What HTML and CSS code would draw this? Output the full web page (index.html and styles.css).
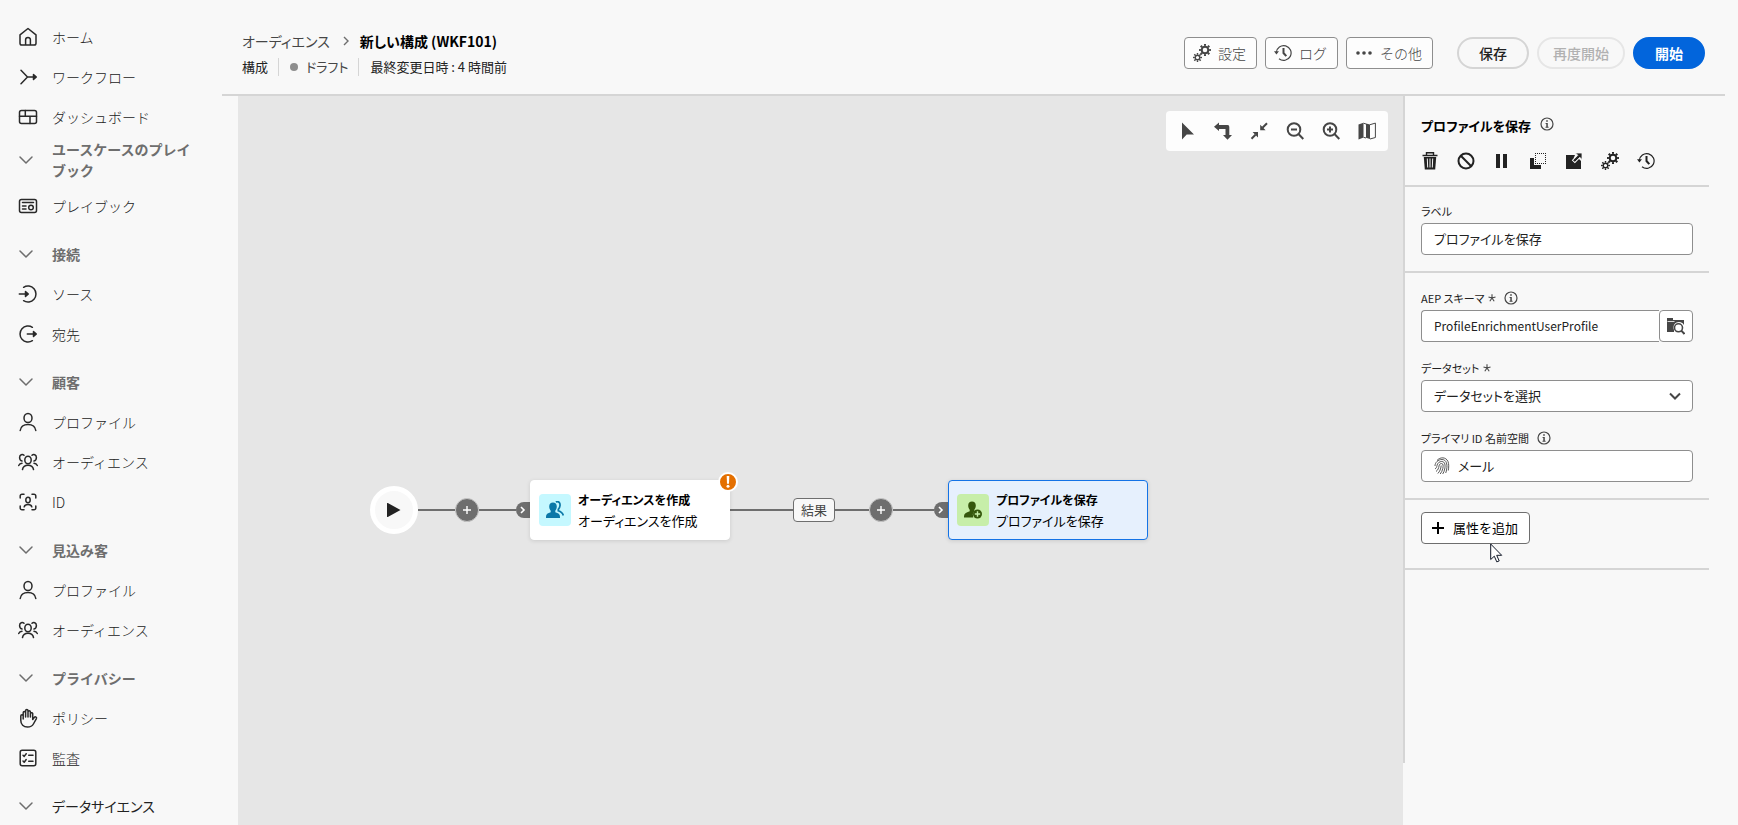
FILE: index.html
```html
<!DOCTYPE html>
<html lang="ja">
<head>
<meta charset="utf-8">
<meta name="viewport" content="width=device-width, initial-scale=1">
<title>新しい構成 (WKF101)</title>
<link rel="stylesheet" href="styles.css">
</head>
<body>
<svg class="sprite" aria-hidden="true">
  <symbol id="chev" viewBox="0 0 20 20"><path d="M4 7l6 6 6-6"/></symbol>
  <symbol id="star" viewBox="0 0 8 8"><path d="M4 .3V4M4 4 .5 2.900M4 4l3.500-1.100M4 4 1.800 7.200M4 4l2.200 3.200" fill="none" stroke="currentColor" stroke-width="1.100"/></symbol>
  <symbol id="user" viewBox="0 0 20 20"><ellipse cx="10" cy="6" rx="4" ry="4.600"/><path d="M2.200 18.500c.6-4.200 3.600-6 7.800-6s7.200 1.800 7.800 6"/></symbol>
  <symbol id="users" viewBox="0 0 20 20"><ellipse cx="10" cy="8" rx="3.200" ry="3.800"/><path d="M4.500 17.500c.5-2.800 2.500-4.200 5.500-4.200s5 1.400 5.500 4.200M6 3.200C4.500 1.800 1.600 2.600 1.600 5.500c0 1.800 1 3.200 2.400 3.500M14 3.200c1.500-1.400 4.400-.6 4.400 2.300 0 1.800-1 3.200-2.400 3.500M.7 13.500c.6-1.200 1.700-2 3.300-2.200M19.300 13.500c-.6-1.200-1.700-2-3.300-2.200"/></symbol>
  <symbol id="gears" viewBox="0 0 18 18"><g fill="none" stroke="currentColor"><circle cx="12" cy="6" r="3.300" stroke-width="2"/><circle cx="12" cy="6" r="4.900" stroke-width="2.200" pathLength="80" stroke-dasharray="5 5" stroke-dashoffset="2.500"/><circle cx="4.500" cy="13.500" r="2.300" stroke-width="1.400"/><circle cx="4.500" cy="13.500" r="3.600" stroke-width="1.800" pathLength="80" stroke-dasharray="5 5" stroke-dashoffset="2.500"/></g></symbol>
  <symbol id="history" viewBox="0 0 18 18"><g fill="none" stroke="currentColor"><path d="M2.300 8.500a7.400 7.400 0 1 1 2.700 6.200" stroke-width="1.200"/><path d="M9.500 4v5l2.800 3.200" stroke-width="2"/></g><path d="M0 7.300h5L2.400 10.500z" fill="currentColor"/></symbol>
  <symbol id="info" viewBox="0 0 14 14"><circle cx="7" cy="7" r="6" fill="none" stroke="currentColor" stroke-width="1.200"/><path d="M6.200 3.300h1.600v1.500H6.200zM5.600 6h2.200v3.700h.8v1H5.500v-1h.8V7h-.7z" fill="currentColor"/></symbol>
</svg>

<div class="app">
  <nav class="side" aria-label="メイン">
    <a class="item" href="#"><svg class="ico" viewBox="0 0 20 20"><path d="M2 7.800 10 1.500l8 6.300v8.400a1.800 1.800 0 0 1-1.800 1.800H3.800A1.800 1.800 0 0 1 2 16.200zM7.600 18v-5.200a2.400 2.400 0 0 1 4.800 0V18"/></svg>ホーム</a>
    <a class="item" href="#"><svg class="ico" viewBox="0 0 20 20"><path d="M3 3.300 9.500 10 3 16.700M9.500 10H18M15.500 7.500 18.300 10l-2.800 2.500z"/></svg>ワークフロー</a>
    <a class="item" href="#"><svg class="ico" viewBox="0 0 20 20"><rect x="1.500" y="3.500" width="17" height="13" rx="2"/><path d="M1.500 9.300h17M7.300 3.500v5.800M12 9.300v7.200"/></svg>ダッシュボード</a>
    <button class="item head tall"><svg class="ico" viewBox="0 0 20 20"><use href="#chev"/></svg><span>ユースケースのプレイ<br>ブック</span></button>
    <a class="item" href="#"><svg class="ico" viewBox="0 0 20 20"><rect x="1.500" y="3.500" width="17" height="13" rx="2"/><path d="M4.500 6.500h11M4.500 10h3.500M4.500 13h3.500"/><circle cx="13" cy="11.500" r="2.300"/></svg>プレイブック</a>
    <button class="item head"><svg class="ico" viewBox="0 0 20 20"><use href="#chev"/></svg>接続</button>
    <a class="item" href="#"><svg class="ico" viewBox="0 0 20 20"><path d="M5.600 3.300a8 8 0 1 1 0 13.400M1.300 10H10M7.500 7.500 10.300 10l-2.800 2.500z"/></svg>ソース</a>
    <a class="item" href="#"><svg class="ico" viewBox="0 0 20 20"><path d="M14.400 3.300a8 8 0 1 0 0 13.400M9.300 10H18M15.500 7.500 18.300 10l-2.800 2.500z"/></svg>宛先</a>
    <button class="item head"><svg class="ico" viewBox="0 0 20 20"><use href="#chev"/></svg>顧客</button>
    <a class="item" href="#"><svg class="ico" viewBox="0 0 20 20"><use href="#user"/></svg>プロファイル</a>
    <a class="item" href="#"><svg class="ico" viewBox="0 0 20 20"><use href="#users"/></svg>オーディエンス</a>
    <a class="item" href="#"><svg class="ico" viewBox="0 0 20 20"><path d="M2.200 6V4A1.800 1.800 0 0 1 4 2.200h2M14 2.200h2A1.800 1.800 0 0 1 17.800 4v2M17.800 14v2a1.800 1.800 0 0 1-1.800 1.800h-2M6 17.800H4A1.800 1.800 0 0 1 2.200 16v-2M6.200 14.800c.4-1.700 1.900-2.300 3.800-2.300s3.400.6 3.800 2.300"/><ellipse cx="10" cy="8" rx="2.200" ry="2.700"/></svg>ID</a>
    <button class="item head"><svg class="ico" viewBox="0 0 20 20"><use href="#chev"/></svg>見込み客</button>
    <a class="item" href="#"><svg class="ico" viewBox="0 0 20 20"><use href="#user"/></svg>プロファイル</a>
    <a class="item" href="#"><svg class="ico" viewBox="0 0 20 20"><use href="#users"/></svg>オーディエンス</a>
    <button class="item head"><svg class="ico" viewBox="0 0 20 20"><use href="#chev"/></svg>プライバシー</button>
    <a class="item" href="#"><svg class="ico" viewBox="0 0 20 20"><path d="M5.200 11V4.800a1.200 1.200 0 0 1 2.400 0V9M7.600 5V2.800a1.200 1.200 0 0 1 2.400 0V9M10 4a1.200 1.200 0 0 1 2.400 0v5M12.400 5.500a1.200 1.200 0 0 1 2.300 0V11.500l1.700-2.200a1.200 1.200 0 0 1 2 1.300l-3 5.400C14.300 18 12.500 19 9.500 19 5.500 19 2.800 16.500 2.800 12.500V8a1.200 1.200 0 0 1 2.400 0"/></svg>ポリシー</a>
    <a class="item" href="#"><svg class="ico" viewBox="0 0 20 20"><rect x="2.200" y="2.200" width="15.600" height="15.600" rx="2"/><path d="M5 7.200l1.200 1.200 2-2.700M5 13l1.200 1.200 2-2.700M10.700 7.300H15M10.700 13.200H15"/></svg>監査</a>
    <button class="item head plain"><svg class="ico" viewBox="0 0 20 20"><use href="#chev"/></svg>データサイエンス</button>
  </nav>

  <div class="main">
    <header class="top">
      <div class="titles">
        <div class="crumbs"><a href="#">オーディエンス</a><svg class="sep" viewBox="0 0 8 10"><path d="M2 1l4 4-4 4"/></svg><h1>新しい構成 (WKF101)</h1></div>
        <div class="meta"><span>構成</span><span class="status">ドラフト</span><span>最終変更日時 : 4 時間前</span></div>
      </div>
      <div class="actions">
        <button class="btn"><svg viewBox="0 0 18 18"><use href="#gears"/></svg>設定</button>
        <button class="btn"><svg viewBox="0 0 18 18"><use href="#history"/></svg>ログ</button>
        <button class="btn"><svg viewBox="0 0 18 18"><g fill="currentColor"><circle cx="3" cy="9" r="1.800"/><circle cx="9" cy="9" r="1.800"/><circle cx="15" cy="9" r="1.800"/></g></svg>その他</button>
        <button class="pill first">保存</button>
        <button class="pill wide" disabled>再度開始</button>
        <button class="pill cta">開始</button>
      </div>
    </header>

    <div class="work">
      <section class="canvas" aria-label="ワークフロー">
        <div class="tools">
          <button aria-label="選択"><svg viewBox="0 0 18 18"><path d="M4 .5v17l4.700-5H16z" fill="currentColor"/></svg></button>
          <button aria-label="方向"><svg viewBox="0 0 18 18"><path d="M5 .5V3h8.500A1.800 1.800 0 0 1 15.300 5v8H18l-4.500 4.800L9 13h2.500V7H5v2L0 4.700z" fill="currentColor"/></svg></button>
          <button aria-label="全体表示"><svg viewBox="0 0 18 18"><path d="M17 1.200 12.500 5.700M1.500 16.800 5.500 12.800" fill="none" stroke="currentColor" stroke-width="2"/><path d="M10.200 2.800v5.400h5.400zM8 15.400V10H2.600z" fill="currentColor"/></svg></button>
          <button aria-label="縮小"><svg viewBox="0 0 18 18"><g fill="none" stroke="currentColor" stroke-width="2"><circle cx="8" cy="7.500" r="6.300"/><path d="M12.500 12l4.800 5M5 7.500h6"/></g></svg></button>
          <button aria-label="拡大"><svg viewBox="0 0 18 18"><g fill="none" stroke="currentColor" stroke-width="2"><circle cx="8" cy="7.500" r="6.300"/><path d="M12.500 12l4.800 5M5 7.500h6M8 4.500v6"/></g></svg></button>
          <button aria-label="マップ"><svg viewBox="0 0 18 18"><path d="M.5 2.500 5.500.8v14.700L.5 17.500zM8 1.500l4 1v14.500l-4-1.200z" fill="currentColor"/><path d="M5.500 1.200 8 2M5.500 15.300 8 16M12 2.700l5.400-1.600v14.400L12 17" fill="none" stroke="currentColor"/></svg></button>
        </div>

        <div class="flow">
          <div class="start"><svg viewBox="0 0 14 14"><path d="M0 .5a.5.5 0 0 1 .8-.4L13.500 7 .8 13.900a.5.5 0 0 1-.8-.4z" fill="#222"/></svg></div>
          <i class="wire w37"></i>
          <button class="plus" aria-label="追加"><svg viewBox="0 0 8 8"><path d="M4 0v8M0 4h8"/></svg></button>
          <i class="wire w37"></i>
          <span class="port"><svg viewBox="0 0 6 8"><path d="M1 1l3 3-3 3"/></svg></span>
          <article class="node">
            <span class="tile cyan"><svg viewBox="0 0 18 18" fill="#0b78a8"><path d="M7 1.500c2.300 0 3.800 1.600 3.800 4 0 2.100-.8 3.300-1.500 4.200v1.500c3 .8 4.700 1.800 4.700 4.600V17H0v-1.200c0-2.800 1.700-3.800 4.700-4.600V9.700C4 8.800 3.200 7.600 3.200 5.500c0-2.400 1.500-4 3.800-4z"/><path d="M9.800 1c3-1.200 4.500.9 4.200 3.600-.2 2-.9 3-1.700 3.800v1.400c2.600.9 4.400 2.200 5 4.700" fill="none" stroke="#0b78a8" stroke-width="1.700"/></svg></span>
            <span class="txt"><b>オーディエンスを作成</b><span>オーディエンスを作成</span></span>
            <span class="warn" role="img" aria-label="警告"><svg viewBox="0 0 4 12"><path d="M.7 0h2.600L3 7.700H1z" fill="#fff"/><circle cx="2" cy="10.300" r="1.500" fill="#fff"/></svg></span>
          </article>
          <i class="wire w63"></i>
          <span class="result">結果</span>
          <i class="wire w34"></i>
          <button class="plus" aria-label="追加"><svg viewBox="0 0 8 8"><path d="M4 0v8M0 4h8"/></svg></button>
          <i class="wire w41"></i>
          <span class="port"><svg viewBox="0 0 6 8"><path d="M1 1l3 3-3 3"/></svg></span>
          <article class="node on">
            <span class="tile green"><svg viewBox="0 0 18 18" fill="#35560c"><path d="M8 .5c2.300 0 3.800 1.600 3.800 4 0 2.100-.8 3.300-1.500 4.200v1.200L8.800 13l.5 3.500H0v-1.200c0-2.800 2-3.800 5.700-5V8.700C5 7.800 4.200 6.600 4.200 4.500c0-2.400 1.500-4 3.800-4z"/><circle cx="13.500" cy="13" r="4.500"/><path d="M13.500 10.300v5.400M10.800 13h5.400" stroke="#c7eea9" stroke-width="1.400"/></svg></span>
            <span class="txt"><b>プロファイルを保存</b><span>プロファイルを保存</span></span>
          </article>
        </div>
      </section>

      <aside class="panel">
        <section class="sec intro">
          <h2>プロファイルを保存 <svg class="info" viewBox="0 0 14 14"><use href="#info"/></svg></h2>
          <div class="cmds">
            <button aria-label="削除"><svg viewBox="0 0 18 18"><path d="M5.500 3V.8h7V3M1.500 3.500h15" fill="none" stroke="currentColor" stroke-width="1.400"/><path d="M2.800 5h12.400l-1 12.500H3.800z" fill="currentColor"/><path d="M6.300 6.500l.4 9M9 6.500v9M11.700 6.500l-.4 9" stroke="#f8f8f8"/></svg></button>
            <button aria-label="無効"><svg viewBox="0 0 18 18"><g fill="none" stroke="currentColor" stroke-width="2"><circle cx="9" cy="9" r="7.500"/><path d="M3.800 3.800l10.400 10.400"/></g></svg></button>
            <button aria-label="一時停止"><svg viewBox="0 0 18 18"><path d="M3 2h4v14H3zM10 2h4v14h-4z" fill="currentColor"/></svg></button>
            <button aria-label="コピー"><svg viewBox="0 0 18 18"><path d="M1 6h4v7h7v4H1z" fill="currentColor"/><path d="M6 1.500h11M6 11.500h11M6.500 3v9M16.500 3v9" fill="none" stroke="currentColor" stroke-dasharray="1 1"/></svg></button>
            <button aria-label="開く"><svg viewBox="0 0 18 18"><path d="M1 3h9L8.500 6.500 6.800 8.200l3 3L14 7l2 2v8H1z" fill="currentColor"/><path d="M10.500 1H17v6.500l-2.200-2.200-5 5-2-2 5-5z" fill="currentColor" stroke="#f8f8f8" stroke-width=".8"/></svg></button>
            <button aria-label="設定"><svg viewBox="0 0 18 18"><use href="#gears"/></svg></button>
            <button aria-label="ログ"><svg viewBox="0 0 18 18"><use href="#history"/></svg></button>
          </div>
        </section>
        <section class="sec">
          <div class="field"><label for="lb">ラベル</label><input id="lb" class="box" value="プロファイルを保存"></div>
        </section>
        <section class="sec fields">
          <div class="field"><label for="sc">AEP スキーマ <svg class="req" viewBox="0 0 8 8"><use href="#star"/></svg> <svg class="info" viewBox="0 0 14 14"><use href="#info"/></svg></label>
            <div class="group"><input id="sc" class="box" value="ProfileEnrichmentUserProfile"><button class="browse" aria-label="参照"><svg viewBox="0 0 18 18"><path d="M0 1h6v2h11v5a5.500 5.500 0 0 0-10 5v2H0z" fill="currentColor"/><path d="M.5 4.500h7" stroke="#fff" stroke-width=".8"/><circle cx="11.500" cy="10.800" r="4" fill="#fff" stroke="currentColor" stroke-width="1.600"/><path d="M14.300 13.600l3.200 3.400" stroke="currentColor" stroke-width="2"/></svg></button></div></div>
          <div class="field"><label for="ds">データセット <svg class="req" viewBox="0 0 8 8"><use href="#star"/></svg></label>
            <div class="pick"><select id="ds" class="box"><option>データセットを選択</option></select><svg viewBox="0 0 12 8"><path d="M1 1.500l5 5 5-5"/></svg></div></div>
          <div class="field"><label for="ns">プライマリ ID 名前空間 <svg class="info" viewBox="0 0 14 14"><use href="#info"/></svg></label>
            <div class="box lead"><svg viewBox="0 0 16 18"><path d="M3 3.500C6-.2 12-.2 14 4.500c1 2.500.8 6 .3 9M1 9c0-3.500 3-6.500 7-6.500 4.500 0 5.500 5 4.700 9.500-.2 1.500-.5 2.700-1 4M1 12c1.500-1 1.700-2 2-3.500.5-2.500 2.500-4 4.700-4 3.500 0 3.800 4 3 7.500-.4 2-1 3.500-2 5M2 14.500c2-1.500 2.700-3.300 3-5.500.3-1.700 1.300-2.500 2.500-2.500 2 0 1.800 2.500 1.300 5-.4 2-1.300 3.800-2.600 5.500M3.800 16.500c2-2 3-4.500 3.400-8"/></svg><input id="ns" value="メール"></div></div>
        </section>
        <section class="sec add">
          <button class="addbtn"><svg viewBox="0 0 12 12"><path d="M6 0v12M0 6h12"/></svg>属性を追加</button>
          <svg class="cursor" viewBox="0 0 13 20"><path d="M.7 1v15.500l3.600-3.300 2.500 5.700 2.400-1-2.500-5.600h5z" fill="#fff" stroke="#111827"/></svg>
        </section>
      </aside>
    </div>
  </div>
</div>
</body>
</html>
```

FILE: styles.css
```css
* { box-sizing: border-box; }
body {
  margin: 0;
  background: #f8f8f8;
  color: #222;
  font: 14px/20px "Noto Sans CJK JP", sans-serif;
  overflow: hidden;
}
button, input, select { font: inherit; color: inherit; }
button { padding: 0; border: 0; background: none; cursor: pointer; }
a { color: inherit; text-decoration: none; }
h1, h2 { margin: 0; font-size: 13px; }
.sprite { position: absolute; width: 0; height: 0; }

.app { display: flex; height: 100vh; }

/* navigation */
.side { flex: 0 0 222px; padding-top: 17px; overflow: hidden; }
.item {
  display: flex;
  align-items: center;
  gap: 14px;
  width: 100%;
  height: 40px;
  padding-left: 18px;
  font-weight: 300;
  line-height: 21px;
  text-align: left;
}
.ico { flex: none; width: 20px; height: 20px; fill: none; stroke: #292929; stroke-width: 1.5; stroke-linecap: round; stroke-linejoin: round; }
.head { gap: 16px; margin-top: 8px; padding-left: 16px; color: #6e6e6e; font-weight: 700; }
.head .ico { stroke: #6e6e6e; }
.tall { height: 49px; margin-top: 0; padding-bottom: 3px; }
.plain { color: #222; font-weight: 400; font-feature-settings: "palt"; }

.main { flex: 1; display: flex; flex-direction: column; min-width: 0; }

/* header */
.top {
  display: flex;
  justify-content: space-between;
  align-items: flex-start;
  height: 96px;
  margin-right: 13px;
  padding: 29px 20px 0;
  border-bottom: 2px solid #d5d5d5;
}
.crumbs { display: flex; align-items: center; height: 24px; font-feature-settings: "palt"; color: #464646; }
.crumbs h1 { color: #000; font-size: 14px; }
.sep { width: 8px; height: 10px; margin: 0 10px 0 12px; fill: none; stroke: #6e6e6e; stroke-width: 1.4; }
.meta { display: flex; align-items: center; height: 28px; font-size: 13px; font-feature-settings: "palt"; }
.meta span + span { margin-left: 10px; padding-left: 11px; border-left: 1px solid #d5d5d5; line-height: 18px; }
.meta .status { display: flex; align-items: center; gap: 8px; color: #464646; }
.status::before { content: ""; width: 8px; height: 8px; border-radius: 50%; background: #8e8e8e; }

.actions { display: flex; gap: 8px; padding-top: 8px; }
.btn {
  display: flex;
  align-items: center;
  gap: 7px;
  height: 32px;
  padding: 0 10px 0 8px;
  border: 1px solid #8e8e8e;
  border-radius: 4px;
  background: #fdfdfd;
  color: #464646;
  font-weight: 300;
}
.btn svg { width: 18px; height: 18px; }
.pill { width: 72px; height: 32px; border: 2px solid #d5d5d5; border-radius: 16px; color: #222; font-weight: 500; }
.first { margin-left: 16px; }
.wide { width: 88px; }
.pill:disabled { border-color: #e6e6e6; color: #b1b1b1; }
.cta { border-color: #0265dc; background: #0265dc; color: #fff; font-weight: 700; }

/* canvas */
.work { flex: 1; display: flex; min-height: 0; padding-left: 16px; }
.canvas { position: relative; flex: 1; background: #e6e6e6; overflow: hidden; }
.tools {
  position: absolute;
  top: 15px;
  right: 15px;
  display: flex;
  padding: 2px 3px;
  border-radius: 4px;
  background: #fdfdfd;
  color: #464646;
}
.tools button { display: grid; place-items: center; width: 36px; height: 36px; }
.tools svg { width: 18px; height: 18px; }

.flow { position: absolute; top: 384px; left: 132px; display: flex; align-items: center; }
.start { display: grid; place-items: center; width: 48px; height: 48px; border: 5px solid #fff; border-radius: 50%; background: #f8f8f8; }
.start svg { width: 14px; height: 14px; }
.wire { height: 2px; background: #6e6e6e; }
.w34 { width: 34px; }
.w37 { width: 37px; }
.w41 { width: 41px; }
.w63 { width: 63px; }
.plus { display: grid; place-items: center; width: 24px; height: 24px; border: 1px solid #c4c4c4; border-radius: 50%; background: #6e6e6e; }
.plus svg { width: 8px; height: 8px; stroke: #fff; stroke-width: 1.4; }
.port { display: grid; place-items: center; width: 14px; height: 16px; border-radius: 8px 0 0 8px; background: #6e6e6e; }
.port svg { width: 6px; height: 8px; fill: none; stroke: #fff; stroke-width: 1.6; }
.node {
  position: relative;
  display: flex;
  align-items: center;
  gap: 7px;
  width: 200px;
  height: 60px;
  padding: 0 8px;
  border: 1px solid #fff;
  border-radius: 4px;
  background: #fff;
  box-shadow: 0 1px 4px rgba(0, 0, 0, .12);
  color: #000;
}
.on { border-color: #1473e6; background: #e6f0fd; }
.tile { display: grid; place-items: center; width: 32px; height: 32px; border-radius: 4px; }
.tile svg { width: 18px; height: 18px; }
.cyan { background: #c5f8ff; }
.green { background: #c7eea9; }
.txt { display: grid; font-size: 13px; line-height: 21px; font-feature-settings: "palt"; }
.txt b { font-size: 12px; }
.warn { position: absolute; top: -9px; right: -9px; display: grid; place-items: center; width: 20px; height: 20px; border: 2px solid #fff; border-radius: 50%; background: #e46f00; }
.warn svg { width: 4px; height: 12px; }
.result { padding: 0 7px; border: 1px solid #6e6e6e; border-radius: 4px; background: #f8f8f8; color: #464646; font-size: 13px; line-height: 22px; }

/* properties panel */
.panel { flex: 0 0 335px; align-self: flex-start; height: calc(100% - 62px); padding-right: 29px; border-left: 2px solid #d5d5d5; }
.sec { position: relative; padding: 14px 16px 16px; border-bottom: 2px solid #d5d5d5; }
.intro { padding: 18px 7px 6px; }
h2 { display: flex; gap: 9px; padding-left: 9px; line-height: 24px; color: #000; font-feature-settings: "palt"; }
.info { width: 14px; height: 14px; color: #464646; }
h2 .info { margin-top: 3px; }
.cmds { display: flex; margin-top: 5px; }
.cmds button { display: grid; place-items: center; width: 36px; height: 36px; }
.cmds svg { width: 18px; height: 18px; }
.fields { padding-top: 15px; }
.field label { display: flex; align-items: center; gap: 4px; height: 22px; padding-bottom: 2px; font-size: 11px; font-feature-settings: "palt"; }
.field label .info { margin-left: 4px; }
.req { width: 8px; height: 8px; color: #464646; }
.field + .field { margin-top: 16px; }
.box {
  display: block;
  width: 100%;
  height: 32px;
  padding: 0 12px;
  border: 1px solid #8e8e8e;
  border-radius: 4px;
  background: #fff;
  font-size: 13px;
  font-feature-settings: "palt";
}
input.box { padding-bottom: 2px; }
.group { display: flex; }
.group .box { border-right: 0; border-radius: 4px 0 0 4px; font-size: 12px; }
.browse { flex: 0 0 34px; display: grid; place-items: center; height: 32px; border: 1px solid #8e8e8e; border-radius: 4px; background: #fff; color: #464646; }
.browse svg { width: 18px; height: 18px; }
.pick { position: relative; }
.pick select { appearance: none; }
.pick svg { position: absolute; right: 12px; top: 12px; width: 12px; height: 8px; fill: none; stroke: #464646; stroke-width: 2; pointer-events: none; }
.lead { display: flex; align-items: center; gap: 8px; }
.lead svg { width: 16px; height: 18px; fill: none; stroke: #464646; stroke-width: .9; }
.lead input { flex: 1; min-width: 0; padding: 0; border: 0; outline: 0; background: none; font-feature-settings: "palt"; }
.add { padding: 12px 16px 24px; }
.addbtn { display: flex; align-items: center; gap: 9px; height: 32px; padding: 0 11px 0 10px; border: 1px solid #6e6e6e; border-radius: 4px; background: #fff; color: #000; font-size: 13px; }
.addbtn svg { width: 12px; height: 12px; stroke: #000; stroke-width: 2; }
.cursor { position: absolute; top: 43px; left: 85px; width: 13px; height: 20px; }
```
